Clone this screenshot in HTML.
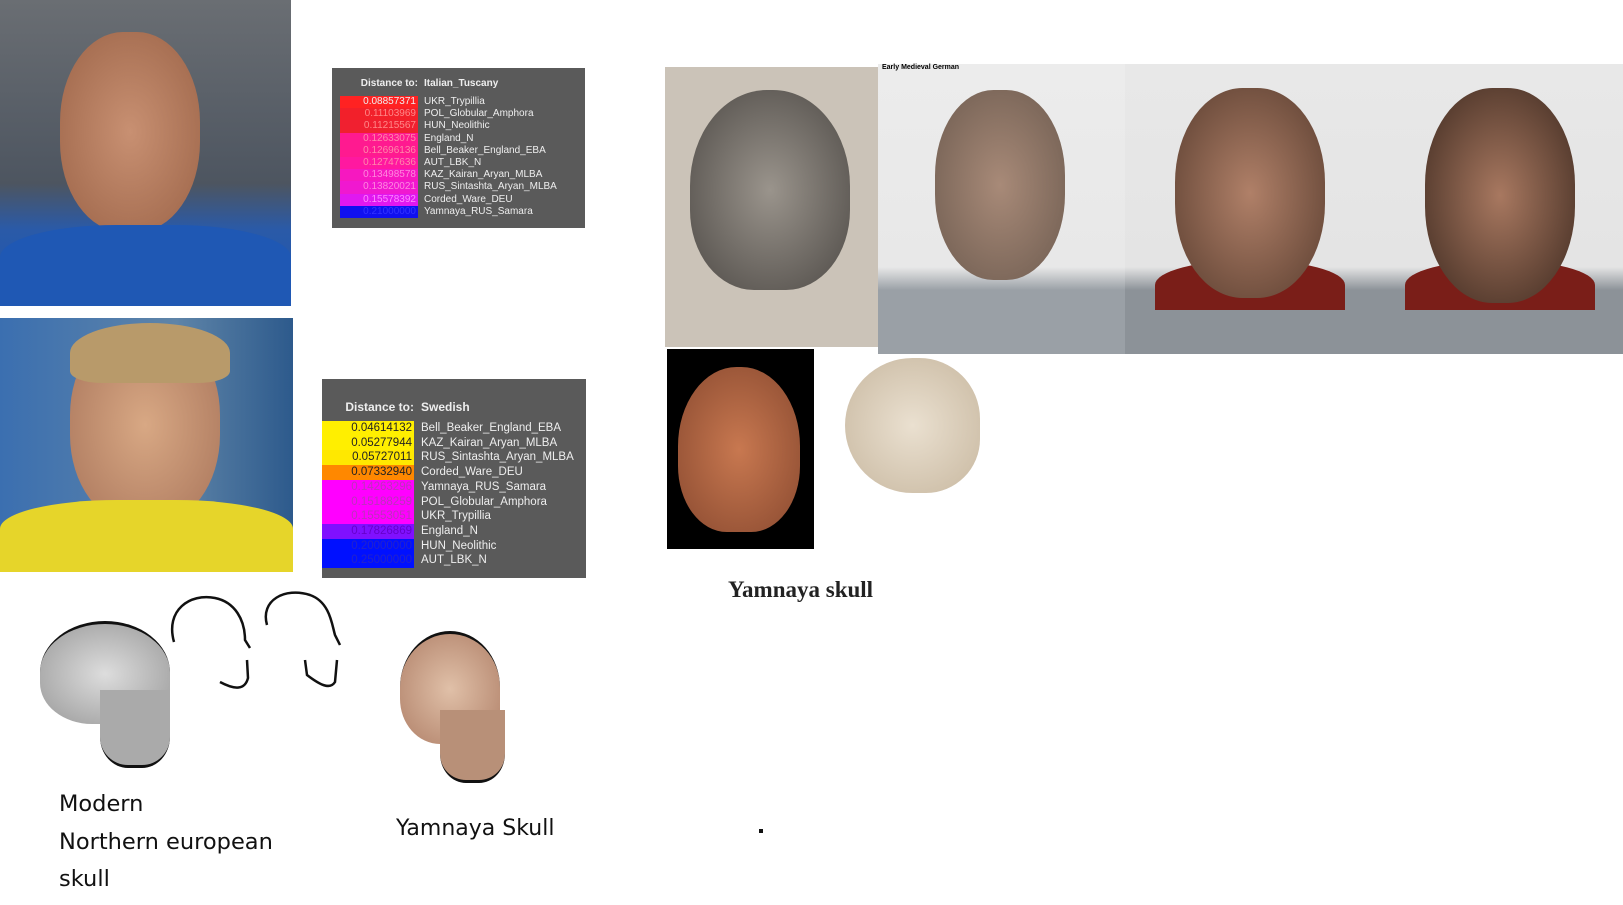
<!DOCTYPE html>
<html><head><meta charset="utf-8"><style>
body{margin:0;width:1623px;height:905px;background:#fff;position:relative;overflow:hidden;font-family:"Liberation Sans",sans-serif}
.a{position:absolute}
.tbl{background:#5a5a5a;color:#eee;font-size:10px}
.row{position:absolute;left:0;height:12.2px;line-height:12.2px;width:100%}
.row .n{position:absolute;left:8px;width:78px;text-align:right;padding-right:2px;box-sizing:border-box}
.row .l{position:absolute;left:92px}
.t2 .row{height:14.7px;line-height:14.7px;font-size:11.5px}
.t2 .row .n{left:0;width:92px;color:#222}
.t2 .row .l{left:99px}
.txt{font-family:"DejaVu Sans","Liberation Sans",sans-serif;color:#111;font-size:22.5px}
</style></head><body>
<div class="a" style="left:0;top:0;width:291px;height:306px;background:linear-gradient(#6a6e73,#4d5560 60%,#2a5aa8 75%,#1e56b0)"></div>
<div class="a" style="left:60px;top:32px;width:140px;height:200px;border-radius:45%;background:radial-gradient(#c89072,#9c6448)"></div>
<div class="a" style="left:0;top:225px;width:291px;height:81px;background:#1f58b4;border-radius:40% 40% 0 0"></div>
<div class="a" style="left:0;top:318px;width:293px;height:254px;background:linear-gradient(90deg,#3b6fb0,#5e84a8 60%,#2d5a8c)"></div>
<div class="a" style="left:70px;top:325px;width:150px;height:200px;border-radius:45%;background:radial-gradient(#d8a884,#a8745a)"></div>
<div class="a" style="left:70px;top:323px;width:160px;height:60px;border-radius:50% 50% 20% 20%;background:#b89a6a"></div>
<div class="a" style="left:0;top:500px;width:293px;height:72px;background:#e6d52a;border-radius:40% 40% 0 0"></div>
<div class="a tbl" style="left:332px;top:68px;width:253px;height:160px">
<div class="a" style="left:0;top:10px;width:86px;text-align:right;font-weight:bold">Distance to:</div>
<div class="a" style="left:92px;top:10px;font-weight:bold">Italian_Tuscany</div>
<div style="position:absolute;left:0;top:28px;width:100%">
<div class="row" style="top:0"><span class="n" style="background:#f22">0.08857371</span><span class="l">UKR_Trypillia</span></div>
<div class="row" style="top:12.2px"><span class="n" style="background:#f2202a;color:#f88">0.11103969</span><span class="l">POL_Globular_Amphora</span></div>
<div class="row" style="top:24.4px"><span class="n" style="background:#f02030;color:#f88">0.11215567</span><span class="l">HUN_Neolithic</span></div>
<div class="row" style="top:36.6px"><span class="n" style="background:#ff1a90;color:#f8a">0.12633075</span><span class="l">England_N</span></div>
<div class="row" style="top:48.8px"><span class="n" style="background:#ff1a90;color:#f8a">0.12696136</span><span class="l">Bell_Beaker_England_EBA</span></div>
<div class="row" style="top:61px"><span class="n" style="background:#ff18a0;color:#f8a">0.12747636</span><span class="l">AUT_LBK_N</span></div>
<div class="row" style="top:73.2px"><span class="n" style="background:#f618c0;color:#f8d">0.13498578</span><span class="l">KAZ_Kairan_Aryan_MLBA</span></div>
<div class="row" style="top:85.4px"><span class="n" style="background:#f018d0;color:#f8d">0.13820021</span><span class="l">RUS_Sintashta_Aryan_MLBA</span></div>
<div class="row" style="top:97.6px"><span class="n" style="background:#e018f0;color:#f8f">0.15578392</span><span class="l">Corded_Ware_DEU</span></div>
<div class="row" style="top:109.8px"><span class="n" style="background:#1010f0;color:#33f">0.21000000</span><span class="l">Yamnaya_RUS_Samara</span></div>
</div></div>
<div class="a tbl t2" style="left:322px;top:379px;width:264px;height:199px">
<div class="a" style="left:0;top:21px;width:92px;text-align:right;font-weight:bold;font-size:12px">Distance to:</div>
<div class="a" style="left:99px;top:21px;font-weight:bold;font-size:12px">Swedish</div>
<div style="position:absolute;left:0;top:42px;width:100%">
<div class="row" style="top:0"><span class="n" style="background:#ffef00">0.04614132</span><span class="l">Bell_Beaker_England_EBA</span></div>
<div class="row" style="top:14.7px"><span class="n" style="background:#ffef00">0.05277944</span><span class="l">KAZ_Kairan_Aryan_MLBA</span></div>
<div class="row" style="top:29.4px"><span class="n" style="background:#ffe800">0.05727011</span><span class="l">RUS_Sintashta_Aryan_MLBA</span></div>
<div class="row" style="top:44.1px"><span class="n" style="background:#ff8800">0.07332940</span><span class="l">Corded_Ware_DEU</span></div>
<div class="row" style="top:58.8px"><span class="n" style="background:#f0f;color:#b3b">0.14263296</span><span class="l">Yamnaya_RUS_Samara</span></div>
<div class="row" style="top:73.5px"><span class="n" style="background:#f0f;color:#b3b">0.15188259</span><span class="l">POL_Globular_Amphora</span></div>
<div class="row" style="top:88.2px"><span class="n" style="background:#f0f;color:#b3b">0.15553051</span><span class="l">UKR_Trypillia</span></div>
<div class="row" style="top:102.9px"><span class="n" style="background:#8010ff;color:#60c">0.17826869</span><span class="l">England_N</span></div>
<div class="row" style="top:117.6px"><span class="n" style="background:#0010ff;color:#22c">0.20000000</span><span class="l">HUN_Neolithic</span></div>
<div class="row" style="top:132.3px"><span class="n" style="background:#0010ff;color:#22c">0.25000000</span><span class="l">AUT_LBK_N</span></div>
</div></div>
<div class="a" style="left:665px;top:67px;width:213px;height:280px;background:#cbc3b8"></div>
<div class="a" style="left:690px;top:90px;width:160px;height:200px;border-radius:48% 48% 40% 40%;background:radial-gradient(#9a948c,#4e4a46)"></div>
<div class="a" style="left:878px;top:64px;width:247px;height:290px;background:linear-gradient(#ececec,#e8e8e8 70%,#9aa0a6 78%)"></div>
<div class="a" style="left:935px;top:90px;width:130px;height:190px;border-radius:45%;background:radial-gradient(#a88a78,#6e5c50)"></div>
<div class="a" style="left:882px;top:64px;font-size:7px;font-weight:bold">Early Medieval German</div>
<div class="a" style="left:1125px;top:64px;width:248px;height:290px;background:linear-gradient(#e8e8e8,#e4e4e4 70%,#8c9298 78%)"></div>
<div class="a" style="left:1155px;top:260px;width:190px;height:50px;border-radius:50% 50% 0 0;background:#7a1e18"></div>
<div class="a" style="left:1175px;top:88px;width:150px;height:210px;border-radius:45%;background:radial-gradient(#b08068,#5a3e30)"></div>
<div class="a" style="left:1373px;top:64px;width:250px;height:290px;background:linear-gradient(#e8e8e8,#e4e4e4 70%,#8c9298 78%)"></div>
<div class="a" style="left:1405px;top:260px;width:190px;height:50px;border-radius:50% 50% 0 0;background:#7a1e18"></div>
<div class="a" style="left:1425px;top:88px;width:150px;height:215px;border-radius:45%;background:radial-gradient(#a87860,#3e2a20)"></div>
<div class="a" style="left:667px;top:349px;width:147px;height:200px;background:#000"></div>
<div class="a" style="left:678px;top:367px;width:122px;height:165px;border-radius:48% 48% 40% 40%;background:radial-gradient(#c87850,#8a4a30)"></div>
<div class="a" style="left:845px;top:358px;width:135px;height:135px;border-radius:50% 45% 40% 50%;background:radial-gradient(#eae0d0,#c8b8a0)"></div>
<div class="a" style="left:728px;top:577px;font-family:'Liberation Serif',serif;font-weight:bold;font-size:23px;color:#222">Yamnaya skull</div>
<div class="a" style="left:40px;top:621px;width:130px;height:100px;border-radius:50% 50% 30% 40%;background:radial-gradient(#ddd,#999);border-top:3px solid #111"></div>
<div class="a" style="left:100px;top:690px;width:70px;height:75px;border-radius:0 0 40% 40%;background:#aaa;border-bottom:3px solid #111"></div>
<svg class="a" style="left:160px;top:590px" width="200" height="110" fill="none" stroke="#111" stroke-width="2.5"><path d="M14 52 C5 20 30 3 55 8 C75 12 85 30 85 50 L90 58 M87 70 L88 88 C85 100 75 100 60 92"/><path d="M107 35 C100 10 125 -3 150 5 C170 12 172 35 175 45 L180 55 M177 70 L175 92 C170 100 160 95 147 85 L145 70"/></svg>
<div class="a" style="left:400px;top:631px;width:100px;height:110px;border-radius:50% 50% 30% 40%;background:radial-gradient(#e0c0a8,#b08068);border-top:3px solid #111"></div>
<div class="a" style="left:440px;top:710px;width:65px;height:70px;border-radius:0 0 40% 40%;background:#b89078;border-bottom:3px solid #111"></div>
<div class="a txt" style="left:59px;top:786px;line-height:37.5px">Modern<br>Northern european<br>skull</div>
<div class="a txt" style="left:396px;top:816px;font-size:22px">Yamnaya Skull</div>
<div class="a" style="left:759px;top:829px;width:4px;height:4px;background:#111"></div>
</body></html>
